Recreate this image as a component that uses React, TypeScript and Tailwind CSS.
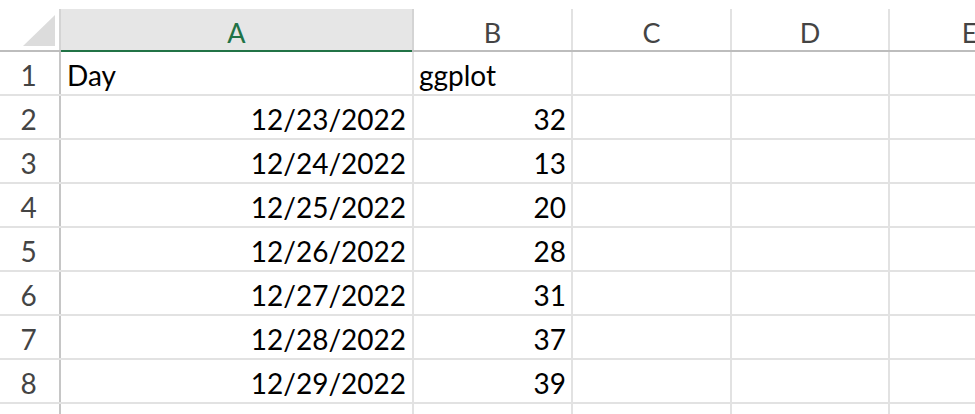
import React from "react";

const rows: [string, string, string][] = [
  ["1", "Day", "ggplot"],
  ["2", "12/23/2022", "32"],
  ["3", "12/24/2022", "13"],
  ["4", "12/25/2022", "20"],
  ["5", "12/26/2022", "28"],
  ["6", "12/27/2022", "31"],
  ["7", "12/28/2022", "37"],
  ["8", "12/29/2022", "39"],
  ["", "", ""],
];

const font = { fontFamily: "Lato, 'Open Sans', sans-serif" };

export default function App() {
  return (
    <div className="w-[975px] h-[414px] overflow-hidden bg-white pt-[9px]" style={font}>
      {/* header row */}
      <div className="flex h-[43px] border-b-2 border-[#bdbdbd]">
        <div className="w-[61px] shrink-0 border-r-2 border-[#d4d4d4] relative">
          <svg className="absolute left-0 top-0" width="59" height="41">
            <polygon points="55,6 55,37 23,37" fill="#dcdcdc" />
          </svg>
        </div>
        <div className="w-[353px] shrink-0 bg-[#e6e6e6] border-r-2 border-[#d4d4d4] relative flex items-end justify-center pb-[4px] text-[27px] leading-none text-[#217346]">
          A
          <div className="absolute left-0 right-0 -bottom-[2px] h-[2px] bg-[#217346]" />
        </div>
        <div className="w-[159px] shrink-0 border-r-2 border-[#e2e2e2] flex items-end justify-center pb-[4px] text-[27px] leading-none text-[#444]">B</div>
        <div className="w-[159px] shrink-0 border-r-2 border-[#e2e2e2] flex items-end justify-center pb-[4px] text-[27px] leading-none text-[#444]">C</div>
        <div className="w-[158px] shrink-0 border-r-2 border-[#e2e2e2] flex items-end justify-center pb-[4px] text-[27px] leading-none text-[#444]">D</div>
        <div className="w-[159px] shrink-0 flex items-end justify-center pb-[4px] text-[27px] leading-none text-[#444]">E</div>
      </div>
      {rows.map(([n, a, b], i) => (
        <div key={i} className="flex h-[44px] border-b-2 border-[#e2e2e2]">
          <div className="w-[61px] shrink-0 border-r-2 border-[#c6c6c6] flex items-end justify-center pr-[2px] pb-[5px] text-[28px] leading-none text-[#444]">
            {n}
          </div>
          <div
            className={`w-[353px] shrink-0 border-r-2 border-[#e2e2e2] flex items-end pb-[5px] text-[28px] leading-none text-black ${
              n === "1" ? "justify-start pl-[6px]" : "justify-end pr-[6px]"
            }`}
          >
            {a}
          </div>
          <div
            className={`w-[159px] shrink-0 border-r-2 border-[#e2e2e2] flex items-end pb-[5px] text-[28px] leading-none text-black ${
              n === "1" ? "justify-start pl-[5px]" : "justify-end pr-[5px]"
            }`}
          >
            {b}
          </div>
          <div className="w-[159px] shrink-0 border-r-2 border-[#e2e2e2]" />
          <div className="w-[158px] shrink-0 border-r-2 border-[#e2e2e2]" />
          <div className="w-[159px] shrink-0" />
        </div>
      ))}
    </div>
  );
}
